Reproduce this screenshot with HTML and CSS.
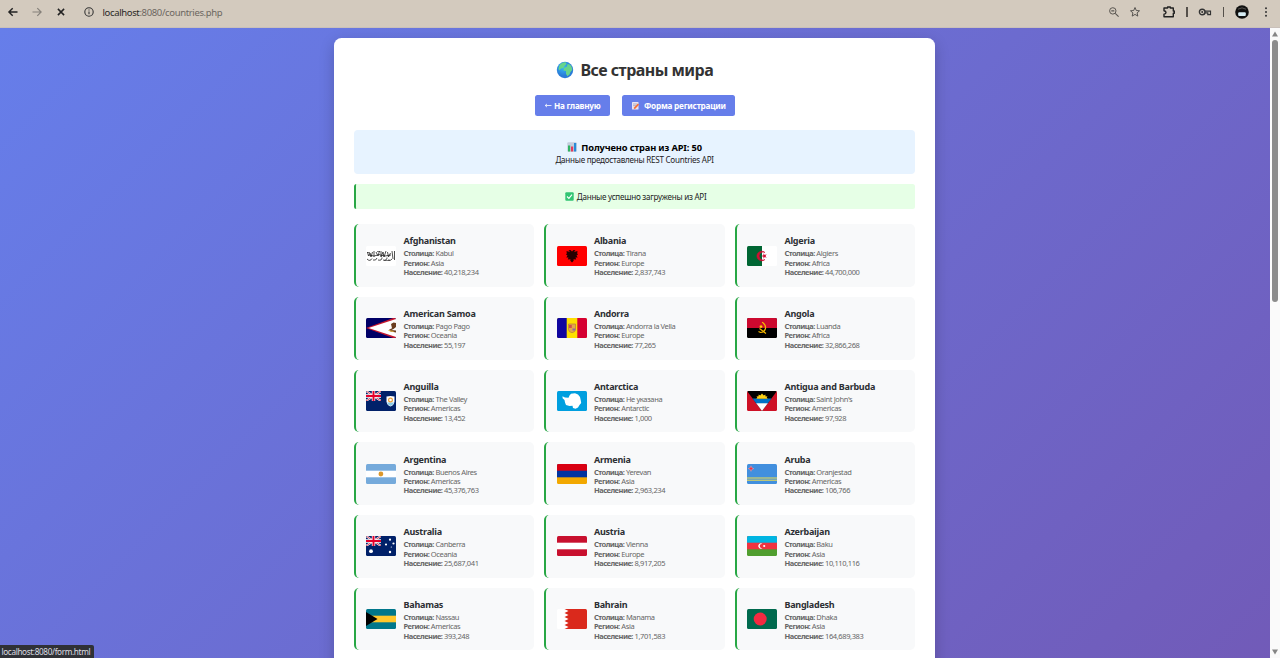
FILE: index.html
```html
<!DOCTYPE html>
<html lang="ru">
<head>
<meta charset="utf-8">
<title>Все страны мира</title>
<link rel="stylesheet" href="styles.css">
</head>
<body>
<svg class="defs" width="0" height="0">
  <symbol id="union" viewBox="0 0 15 10"><rect width="15" height="10" fill="#012169"/><path d="M0 0L15 10M15 0L0 10" stroke="#fff" stroke-width="2"/><path d="M0 0L15 10M15 0L0 10" stroke="#c8102e" stroke-width=".8"/><path d="M7.5 0V10M0 5H15" stroke="#fff" stroke-width="3.4"/><path d="M7.5 0V10M0 5H15" stroke="#e4002b" stroke-width="2"/></symbol>
</svg>
<header class="toolbar">
  <div class="nav">
    <svg viewBox="0 0 12 12" class="ic"><path d="M10.5 6H2M5.7 2.2L1.9 6l3.8 3.8" stroke="#222" stroke-width="1.4" fill="none"/></svg>
    <svg viewBox="0 0 12 12" class="ic"><path d="M1.5 6H10M6.3 2.2L10.1 6 6.3 9.8" stroke="#85807a" stroke-width="1.2" fill="none"/></svg>
    <svg viewBox="0 0 12 12" class="ic"><path d="M2.9 2.9l6.2 6.2M9.1 2.9L2.9 9.1" stroke="#222" stroke-width="1.5" fill="none"/></svg>
  </div>
  <svg viewBox="0 0 12 12" class="ic info"><circle cx="6" cy="6" r="4.2" stroke="#333" stroke-width="1.1" fill="none"/><path d="M6 5.4V8.3M6 3.5V4.5" stroke="#333" stroke-width="1.1"/></svg>
  <div class="url"><span class="host">localhost</span>:8080/countries.php</div>
  <div class="tools">
    <svg viewBox="0 0 12 12" class="ic t1"><circle cx="4.8" cy="4.9" r="3.2" stroke="#5a5651" fill="none"/><path d="M7.2 7.3L10.6 10.6M3.3 4.9H6.3" stroke="#5a5651" stroke-width="1.1"/></svg>
    <svg viewBox="0 0 12 12" class="ic t2"><path d="M6 1.500l1.300 3 3.200.3-2.400 2.100.7 3.200L6 8.400l-2.800 1.700.7-3.200L1.500 4.800l3.200-.3z" stroke="#4a4744" stroke-width=".9" fill="none"/></svg>
    <svg viewBox="0 0 14 14" class="ext"><path d="M2 3H5.600V2H8.300V3H11.300V6H12.300V8.300H11.300V11.800H2V9.200Q4 8.900 4 7.500 4 6 2 5.700Z" stroke="#222" stroke-width="1.400" fill="none" stroke-linejoin="round"/></svg>
    <i class="sep s1"></i>
    <svg viewBox="0 0 14 10" class="key"><circle cx="4.2" cy="5" r="2.800" stroke="#333" stroke-width="1.400" fill="none"/><circle cx="4.2" cy="5" r="1" fill="#333"/><path d="M7 4.200H12.500V7.600H9.800V5.800H7" stroke="#333" stroke-width="1.200" fill="none"/></svg>
    <i class="sep s2"></i>
    <svg viewBox="0 0 14 14" class="avatar"><circle cx="7" cy="7" r="6.800" fill="#111"/><path d="M3 4.200Q7 1.500 11 4.200" stroke="#77736e" stroke-width=".7" fill="none"/><rect x="3.200" y="7.300" width="7.600" height="3.700" rx="1" fill="#d7edf4"/></svg>
    <svg viewBox="0 0 4 12" class="dots"><g fill="#333"><circle cx="2" cy="2.200" r="1"/><circle cx="2" cy="6" r="1"/><circle cx="2" cy="9.800" r="1"/></g></svg>
  </div>
</header>
<div class="viewport">
  <div class="page">
    <main class="container">
      <h1><svg viewBox="0 0 18 18" class="globe"><defs><radialGradient id="sea" cx=".4" cy=".35"><stop offset="0" stop-color="#35baf5"/><stop offset="1" stop-color="#2a7bd8"/></radialGradient></defs><circle cx="9" cy="9" r="8.200" fill="url(#sea)"/><path d="M4.500 3Q7 1 10 1.400L10.500 3 8.500 5 7.500 7 5 7.500 3.500 9.500 2.500 8Q2.500 5 4.500 3ZM11.500 3Q14.500 3 15.700 6L16.300 9 14.500 11 13.500 13.500 11.500 15.300 10 13V10L7.500 9.500 8 7 11 5.500Z" fill="#67d48c"/></svg><span>Все страны мира</span></h1>
      <nav class="links">
        <a class="btn b1"><svg viewBox="0 0 8 8" class="arr"><path d="M7.500 4.500H1.200M3 2.900L1.200 4.500l1.800 1.600" stroke="#fff" stroke-width=".8" fill="none"/></svg><span>На главную</span></a>
        <a class="btn b2"><svg viewBox="0 0 9 9" class="memo"><rect x="1" y="1" width="6.500" height="7.600" rx=".6" fill="#e9e4f0"/><path d="M2 3H6.200M2 4.700H5" stroke="#8f87a8" stroke-width=".6"/><path d="M3.200 7.700L7.500 3.200" stroke="#f46d35" stroke-width="1.700"/></svg><span>Форма регистрации</span></a>
      </nav>
      <section class="stats">
        <div class="count"><svg viewBox="0 0 10 10" class="chart"><rect x=".3" y=".3" width="9.400" height="9.400" rx="1" fill="#c3cddd"/><rect x="1" y="3.500" width="2.200" height="6" fill="#2fb463"/><rect x="4" y="4.500" width="2.200" height="5" fill="#e33a5c"/><rect x="7" y="1" width="2.200" height="8.500" fill="#278ad8"/></svg><span>Получено стран из API: 50</span></div>
        <div class="src">Данные предоставлены REST Countries API</div>
      </section>
      <section class="success"><svg viewBox="0 0 9 9" class="check"><rect x=".3" y=".3" width="8.400" height="8.400" rx="1" fill="#32c573"/><path d="M2 4.500L3.900 6.400 7 2.600" stroke="#fff" stroke-width="1.100" fill="none"/></svg><span>Данные успешно загружены из API</span></section>
      <section class="grid">
        <article class="card"><svg class="flag" viewBox="0 0 30 20"><rect width="30" height="20" fill="#fff"/><g stroke="#222" fill="none" stroke-width=".8"><path d="M1.500 6l1 4 1.500-3 1 4 1.500-5M8 5v6M10 6l2 4 1.500-5M15 5v6l2-5 1 5 2-6M21.500 6l1 5 2-4M26 5l1 8M28.500 5v9"/><path d="M1 13q3 3 5-.5M7 14q3 1 4-2M12 14q4 1 4-2.500M17 14q4 1 4-2.500M22 14q3 1 4-1M3 9l5 1 6-1.500M14 9l5 1 6-1"/><path d="M1 6.500h3M11 5.500h3M18 14.500h6" stroke-width=".6"/></g></svg><div class="txt"><h3>Afghanistan</h3><p><b>Столица:</b> Kabul</p><p><b>Регион:</b> Asia</p><p><b>Население:</b> 40,218,234</p></div></article>
        <article class="card"><svg class="flag" viewBox="0 0 30 20"><rect width="30" height="20" fill="#f00"/><path d="M15 5.500L13.500 4 11.500 4.300 13 6 9.500 5 9.800 7.500 9 8.500 10.500 9.500 9.300 11.500 11.500 11.500 10.800 13.500 13.500 13.200 13.300 14.800 15 16.500 16.700 14.800 16.500 13.200 19.200 13.500 18.500 11.500 20.700 11.500 19.500 9.500 21 8.500 20.200 7.500 20.500 5 17 6 18.500 4.300 16.500 4Z" fill="#260000"/></svg><div class="txt"><h3>Albania</h3><p><b>Столица:</b> Tirana</p><p><b>Регион:</b> Europe</p><p><b>Население:</b> 2,837,743</p></div></article>
        <article class="card"><svg class="flag" viewBox="0 0 30 20"><rect width="30" height="20" fill="#fff"/><rect width="15" height="20" fill="#006633"/><path d="M18 6.500A4.800 4.800 0 1 0 18 13.500A4 4 0 1 1 18 6.500Z" fill="#d21034" stroke="#d21034" stroke-width=".6"/><path d="M14.200 10l2.200-.8.1-1.900 1.200 1.600 2-.6-1.200 1.700 1.200 1.700-2-.6-1.200 1.600-.1-1.900z" fill="#d21034"/></svg><div class="txt"><h3>Algeria</h3><p><b>Столица:</b> Algiers</p><p><b>Регион:</b> Africa</p><p><b>Население:</b> 44,700,000</p></div></article>

        <article class="card"><svg class="flag" viewBox="0 0 30 20"><rect width="30" height="20" fill="#000066"/><path d="M30 -1L0 10 30 21Z" fill="#c5162e"/><path d="M30 1L2.500 10 30 19Z" fill="#fff"/><path d="M25 6l2.500-1.500 2.500.5V9l-2.500 2-2 1 4.500.5v2l-5.500-1-1.500-1.700 3-1.500z" fill="#6b3e20"/><path d="M22.500 12.500l5 1" stroke="#e7b63a"/></svg><div class="txt"><h3>American Samoa</h3><p><b>Столица:</b> Pago Pago</p><p><b>Регион:</b> Oceania</p><p><b>Население:</b> 55,197</p></div></article>
        <article class="card"><svg class="flag" viewBox="0 0 30 20"><rect width="30" height="20" fill="#fedf00"/><rect width="9.700" height="20" fill="#10069f"/><rect x="20.300" width="9.700" height="20" fill="#d50032"/><path d="M11.500 6h7v5.500q0 2.500-3.500 3.200-3.500-.7-3.500-3.200z" fill="#e5a74b" stroke="#b97a38" stroke-width=".7"/><path d="M12 7h2.800v3H12z" fill="#d1514c"/><path d="M15.500 10.500h2.800v2h-2.800z" fill="#8a6aa5"/></svg><div class="txt"><h3>Andorra</h3><p><b>Столица:</b> Andorra la Vella</p><p><b>Регион:</b> Europe</p><p><b>Население:</b> 77,265</p></div></article>
        <article class="card"><svg class="flag" viewBox="0 0 30 20"><rect width="30" height="20"/><rect width="30" height="10" fill="#cc092f"/><path d="M15 4.300q4 2 3.500 6-1 4-5 4.200l-2-1M12.500 10.500l6.500 5" stroke="#f5b800" stroke-width="1.200" fill="none"/><path d="M14 6.500l.6 1.300 1.500.1-1.200.9.4 1.500-1.300-.8-1.300.8.400-1.500-1.200-.9 1.500-.1z" fill="#ffcb00"/></svg><div class="txt"><h3>Angola</h3><p><b>Столица:</b> Luanda</p><p><b>Регион:</b> Africa</p><p><b>Население:</b> 32,866,268</p></div></article>

        <article class="card"><svg class="flag" viewBox="0 0 30 20"><rect width="30" height="20" fill="#012169"/><use href="#union" width="15" height="10"/><path d="M20.500 5.500q4-1 8 0v5q-.5 4-4 5-3.500-1-4-5z" fill="#fff"/><path d="M21 11.500h7q-1 2.800-3.500 3.500-2.500-.7-3.500-3.500z" fill="#8acce8"/><circle cx="24.500" cy="9" r="1.900" stroke="#eea13a" stroke-width="1.200" fill="none"/></svg><div class="txt"><h3>Anguilla</h3><p><b>Столица:</b> The Valley</p><p><b>Регион:</b> Americas</p><p><b>Население:</b> 13,452</p></div></article>
        <article class="card"><svg class="flag" viewBox="0 0 30 20"><rect width="30" height="20" fill="#009fdf"/><path d="M5.500 5.200L8 6.500 11.500 6.800 12.500 4.500 14 2.800 18 2.300 21 3.500 23 6 23.700 9 24.200 12 22.500 14 21 16.500 18.500 17.700 16 17 15.500 14.800 12.500 15 9 14 8 11.500 7.500 9 5.600 7.200Z" fill="#fff"/></svg><div class="txt"><h3>Antarctica</h3><p><b>Столица:</b> Не указана</p><p><b>Регион:</b> Antarctic</p><p><b>Население:</b> 1,000</p></div></article>
        <article class="card"><svg class="flag" viewBox="0 0 30 20"><rect width="30" height="20" fill="#ce1126"/><path d="M0 0H30L15 20Z"/><path d="M5.500 7.500H24.500L20.500 12.700H9.500Z" fill="#0072c6"/><path d="M9.200 12.200H20.800L15 20Z" fill="#fff"/><path d="M9 7.700l1.300-.8-.7-1.700 1.800.2.300-2 1.500 1.200L15 2.500l1.800 2.100 1.500-1.200.3 2 1.800-.2-.7 1.700 1.300.8z" fill="#fcd116"/></svg><div class="txt"><h3>Antigua and Barbuda</h3><p><b>Столица:</b> Saint John's</p><p><b>Регион:</b> Americas</p><p><b>Население:</b> 97,928</p></div></article>

        <article class="card"><svg class="flag" viewBox="0 0 30 20"><rect width="30" height="20" fill="#75aadb"/><rect y="6.700" width="30" height="6.600" fill="#fff"/><circle cx="14.900" cy="10" r="2.400" fill="#dc982c"/></svg><div class="txt"><h3>Argentina</h3><p><b>Столица:</b> Buenos Aires</p><p><b>Регион:</b> Americas</p><p><b>Население:</b> 45,376,763</p></div></article>
        <article class="card"><svg class="flag" viewBox="0 0 30 20"><rect width="30" height="20" fill="#f2a800"/><rect width="30" height="13.300" fill="#0033a0"/><rect width="30" height="6.700" fill="#d90012"/></svg><div class="txt"><h3>Armenia</h3><p><b>Столица:</b> Yerevan</p><p><b>Регион:</b> Asia</p><p><b>Население:</b> 2,963,234</p></div></article>
        <article class="card"><svg class="flag" viewBox="0 0 30 20"><rect width="30" height="20" fill="#418fde"/><path d="M0 14H30M0 16.200H30" stroke="#f5e04a"/><path d="M4 1.800l.8 2 2 .8-2 .8-.8 2-.8-2-2-.8 2-.8z" fill="#ef3340" stroke="#f6b7c4" stroke-width=".4"/></svg><div class="txt"><h3>Aruba</h3><p><b>Столица:</b> Oranjestad</p><p><b>Регион:</b> Americas</p><p><b>Население:</b> 106,766</p></div></article>

        <article class="card"><svg class="flag" viewBox="0 0 30 20"><rect width="30" height="20" fill="#012169"/><use href="#union" width="15" height="10"/><g fill="#fff"><circle cx="5" cy="15.200" r="1.900"/><circle cx="24" cy="3.700" r="1.100"/><circle cx="20" cy="8.500" r="1.100"/><circle cx="27.500" cy="7.500" r="1.100"/><circle cx="24" cy="16" r="1.200"/><circle cx="25.300" cy="11" r=".6"/></g></svg><div class="txt"><h3>Australia</h3><p><b>Столица:</b> Canberra</p><p><b>Регион:</b> Oceania</p><p><b>Население:</b> 25,687,041</p></div></article>
        <article class="card"><svg class="flag" viewBox="0 0 30 20"><rect width="30" height="20" fill="#c8102e"/><rect y="6.700" width="30" height="6.600" fill="#fff"/></svg><div class="txt"><h3>Austria</h3><p><b>Столица:</b> Vienna</p><p><b>Регион:</b> Europe</p><p><b>Население:</b> 8,917,205</p></div></article>
        <article class="card"><svg class="flag" viewBox="0 0 30 20"><rect width="30" height="20" fill="#509e2f"/><rect width="30" height="13.300" fill="#ef3340"/><rect width="30" height="6.700" fill="#00b5e2"/><path d="M15.500 8A2.600 2.600 0 1 0 15.500 12A2.100 2.100 0 1 1 15.500 8Z" fill="#fff"/><circle cx="17.200" cy="10" r="1.100" fill="#fff"/></svg><div class="txt"><h3>Azerbaijan</h3><p><b>Столица:</b> Baku</p><p><b>Регион:</b> Asia</p><p><b>Население:</b> 10,110,116</p></div></article>

        <article class="card"><svg class="flag" viewBox="0 0 30 20"><rect width="30" height="20" fill="#00778b"/><rect y="6.700" width="30" height="6.600" fill="#ffc72c"/><path d="M0 3L11.500 10 0 17Z"/></svg><div class="txt"><h3>Bahamas</h3><p><b>Столица:</b> Nassau</p><p><b>Регион:</b> Americas</p><p><b>Население:</b> 393,248</p></div></article>
        <article class="card"><svg class="flag" viewBox="0 0 30 20"><rect width="30" height="20" fill="#fff"/><path d="M30 0H7.500L11.500 2 7.500 4 11.500 6 7.500 8 11.500 10 7.500 12 11.500 14 7.500 16 11.500 18 7.500 20H30Z" fill="#da291c"/></svg><div class="txt"><h3>Bahrain</h3><p><b>Столица:</b> Manama</p><p><b>Регион:</b> Asia</p><p><b>Население:</b> 1,701,583</p></div></article>
        <article class="card"><svg class="flag" viewBox="0 0 30 20"><rect width="30" height="20" fill="#006a4e"/><circle cx="13.200" cy="10" r="6.500" fill="#f42a41"/></svg><div class="txt"><h3>Bangladesh</h3><p><b>Столица:</b> Dhaka</p><p><b>Регион:</b> Asia</p><p><b>Население:</b> 164,689,383</p></div></article>
      </section>
    </main>
  </div>
  <aside class="scroll">
    <svg viewBox="0 0 10 8" class="up"><path d="M5 1.500L8 6.500H2Z" fill="#858585"/></svg>
    <div class="track"><div class="thumb"></div></div>
    <svg viewBox="0 0 10 8" class="up"><path d="M5 6.500L8 1.500H2Z" fill="#858585"/></svg>
  </aside>
  <div class="status">localhost:8080/form.html</div>
</div>
</body>
</html>
```
FILE: styles.css
```css
* { box-sizing: border-box; margin: 0; padding: 0; }
body { width: 1280px; height: 658px; overflow: hidden; display: flex; flex-direction: column; font-family: "Noto Sans", "Open Sans", sans-serif; }
svg { display: block; flex: none; }
.defs { position: absolute; }

.toolbar { height: 27.5px; flex: none; background: #d3cabe; display: flex; align-items: center; padding: 0 12px 3px 7px; border-bottom: 1px solid #c9c0ba; }
.nav { display: flex; gap: 12px; }
.ic { width: 12px; height: 12px; }
.info { margin-left: 16px; }
.url { margin-left: 7.5px; padding-top: 1px; font-size: 9.5px; letter-spacing: -.36px; color: #6b6660; white-space: nowrap; }
.host { color: #292725; }
.tools { margin-left: auto; display: flex; align-items: center; }
.t2 { margin-left: 9.5px; }
.ext { width: 14px; height: 14px; margin-left: 21px; }
.sep { width: 1.3px; height: 10px; background: #55504b; }
.s1 { margin-left: 10px; }
.key { width: 14px; height: 10px; margin-left: 10px; }
.s2 { margin-left: 11px; }
.avatar { width: 14px; height: 14px; margin-left: 11px; }
.dots { width: 4px; height: 12px; margin-left: 15px; }

.viewport { flex: 1; min-height: 0; display: flex; position: relative; }
.page { flex: 1; overflow: hidden; padding: 10.5px 0 0 334px; background: linear-gradient(135deg, #667eea, #764ba2) 0 0 / 100% 1465px no-repeat; }
.container { width: 601.3px; height: 1430px; background: #fff; border-radius: 7.5px; padding: 20px; box-shadow: 0 5px 15px rgba(0, 0, 0, .2); }

h1 { height: 24px; display: flex; align-items: center; justify-content: center; gap: 6.5px; font-size: 16px; line-height: 24px; letter-spacing: -.53px; color: #333; white-space: nowrap; }
.globe { width: 18px; height: 18px; }
.links { display: flex; justify-content: center; gap: 12.5px; margin-top: 13px; }
.btn { height: 20.5px; border-radius: 2.5px; background: #667eea; color: #fff; font-size: 8.2px; letter-spacing: -.22px; font-weight: 700; display: flex; align-items: center; justify-content: center; gap: 2px; white-space: nowrap; }
.b1 { width: 75px; }
.b2 { width: 112.3px; gap: 4px; }
.arr { width: 8px; height: 8px; }
.memo { width: 9px; height: 9px; }
.stats { margin-top: 14.5px; height: 43.7px; border-radius: 4px; background: #e7f3ff; display: flex; flex-direction: column; align-items: center; padding-top: 10.5px; color: #000; white-space: nowrap; }
.count { display: flex; align-items: center; gap: 4px; font-size: 9.3px; letter-spacing: -.14px; font-weight: 700; line-height: 13px; }
.chart { width: 10px; height: 10px; }
.src { font-size: 8.1px; line-height: 11px; letter-spacing: -.26px; color: #1d2125; }
.success { margin-top: 10px; height: 25.7px; border-radius: 2.5px; border-left: 2px solid #28a745; background: #e6ffe6; display: flex; align-items: center; justify-content: center; gap: 3px; font-size: 8.1px; letter-spacing: -.26px; color: #1d251d; white-space: nowrap; }
.check { width: 9px; height: 9px; }

.grid { margin-top: 15px; display: grid; grid-template-columns: repeat(3, 1fr); grid-auto-rows: 62.6px; gap: 10.1px; }
.card { border-radius: 5px; border-left: 2px solid #28a745; background: #f8f9fa; display: flex; align-items: center; padding-left: 10.2px; gap: 7.3px; }
.flag { width: 30px; height: 20px; border-radius: 1.5px; }
.txt { white-space: nowrap; padding-top: 1.6px; }
.txt h3 { font-size: 9px; line-height: 12px; letter-spacing: -.24px; color: #2c2f33; margin-bottom: 2px; }
.txt p { font-size: 7.5px; line-height: 9.35px; color: #666; letter-spacing: -.38px; }
.txt b { font-weight: 700; letter-spacing: -.5px; }

.scroll { width: 10px; background: #fafafa; display: flex; flex-direction: column; align-items: center; padding: 2px 0; }
.up { width: 10px; height: 8px; }
.track { flex: 1; padding-top: 2.5px; }
.thumb { width: 5.5px; height: 262px; border-radius: 3px; background: #8b8b8b; }
.status { position: absolute; left: 0; bottom: 0; width: 94px; height: 13px; background: #2f3136; color: #dcdde0; font-size: 8.2px; letter-spacing: -.36px; line-height: 13.5px; padding-left: 1.5px; border-radius: 0 2px 0 0; white-space: nowrap; }
```
